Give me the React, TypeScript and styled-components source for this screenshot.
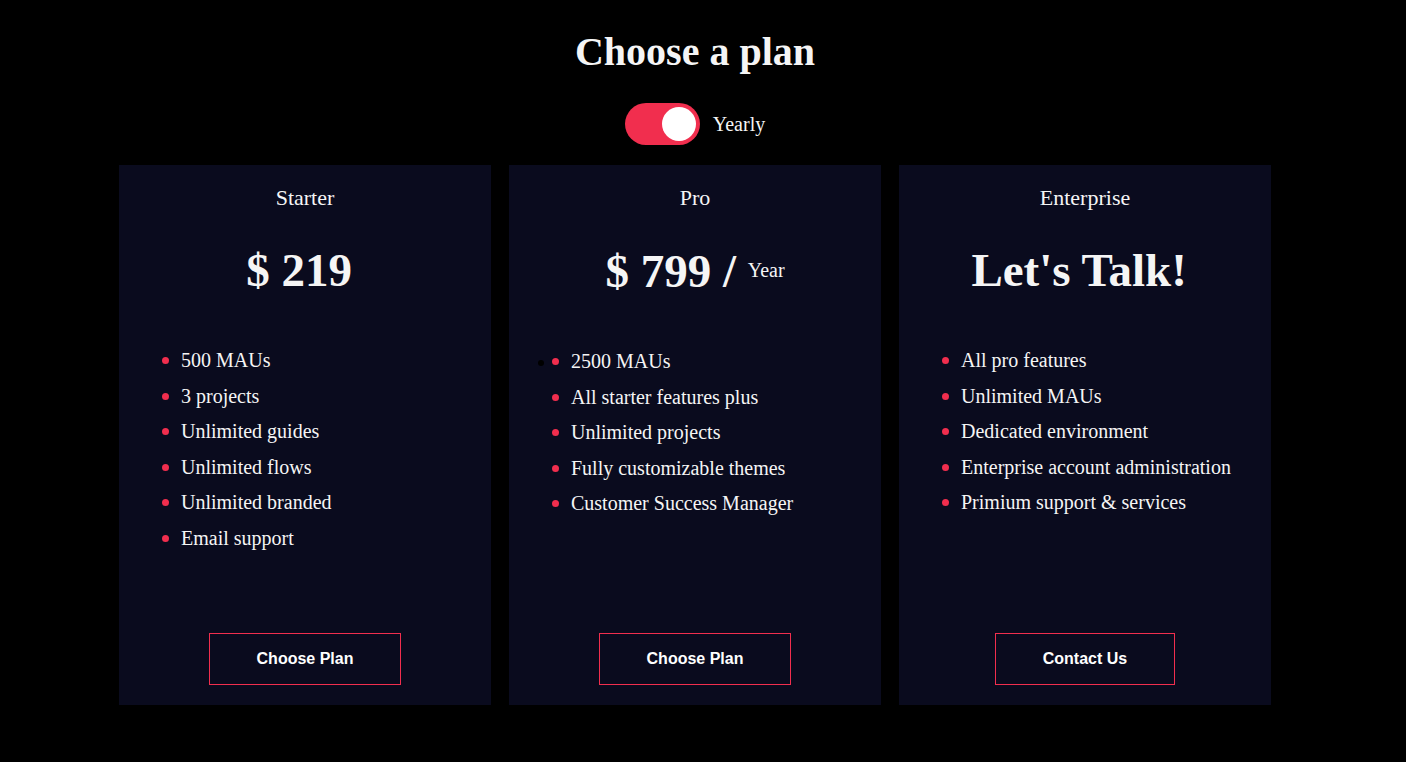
import styled, { createGlobalStyle } from "styled-components";

const Global = createGlobalStyle`
  html, body {
    margin: 0;
    padding: 0;
    background: #000;
  }
  body {
    font-family: "Liberation Serif", "Times New Roman", serif;
    color: #f5f5f5;
  }
`;

const Page = styled.div`
  width: 1390px;
  display: flex;
  flex-direction: column;
  align-items: center;
  padding-top: 28px;
`;

const Title = styled.h1`
  margin: 0;
  font-size: 40px;
  font-weight: bold;
  line-height: 48px;
`;

const ToggleRow = styled.div`
  display: flex;
  align-items: center;
  gap: 13px;
  margin-top: 27px;
  font-size: 20px;
`;

const Switch = styled.button`
  width: 75px;
  height: 42px;
  border-radius: 21px;
  border: none;
  padding: 0 4px;
  background: #f12e4e;
  display: flex;
  align-items: center;
  justify-content: flex-end;
  cursor: pointer;
`;

const Knob = styled.span`
  width: 34px;
  height: 34px;
  border-radius: 50%;
  background: #fff;
`;

const Cards = styled.div`
  display: flex;
  gap: 18px;
  margin-top: 20px;
`;

const Card = styled.div`
  width: 372px;
  height: 540px;
  box-sizing: border-box;
  background: #0a0b1e;
  padding: 20px 0 20px;
  display: flex;
  flex-direction: column;
  align-items: center;
`;

const PlanName = styled.div`
  font-size: 22px;
  line-height: 25px;
`;

const Price = styled.div`
  margin-top: 33px;
  font-size: 47px;
  font-weight: bold;
  line-height: 54px;
  white-space: pre;
`;

const Per = styled.span`
  font-size: 20px;
  font-weight: normal;
  vertical-align: 10px;
`;

const Features = styled.ul<{ $stray?: boolean }>`
  align-self: stretch;
  margin: 46px 0 0;
  padding-left: 62px;
  list-style: none;
  font-size: 20px;
  line-height: 35.5px;
  position: relative;

  ${(p) =>
    p.$stray &&
    `
    &::before {
      content: "";
      position: absolute;
      left: 29px;
      top: 16px;
      width: 6px;
      height: 6px;
      border-radius: 50%;
      background: #000;
    }
  `}
`;

const Feature = styled.li`
  position: relative;

  &::before {
    content: "";
    position: absolute;
    left: -19px;
    top: 14px;
    width: 7px;
    height: 7px;
    border-radius: 50%;
    background: #f12e4e;
  }
`;

const PlanButton = styled.button`
  margin-top: auto;
  height: 52px;
  padding: 0 47px;
  background: transparent;
  border: 1px solid #f12e4e;
  color: #fff;
  font-family: "Liberation Sans", Arial, sans-serif;
  font-weight: bold;
  font-size: 16px;
  cursor: pointer;
`;

const plans = [
  {
    name: "Starter",
    price: <>{"$ 219 "}</>,
    features: [
      "500 MAUs",
      "3 projects",
      "Unlimited guides",
      "Unlimited flows",
      "Unlimited branded",
      "Email support",
    ],
    cta: "Choose Plan",
  },
  {
    name: "Pro",
    price: (
      <>
        {"$ 799 / "}
        <Per>Year</Per>
      </>
    ),
    features: [
      "2500 MAUs",
      "All starter features plus",
      "Unlimited projects",
      "Fully customizable themes",
      "Customer Success Manager",
    ],
    cta: "Choose Plan",
    stray: true,
  },
  {
    name: "Enterprise",
    price: <>{"Let's Talk! "}</>,
    features: [
      "All pro features",
      "Unlimited MAUs",
      "Dedicated environment",
      "Enterprise account administration",
      "Primium support & services",
    ],
    cta: "Contact Us",
  },
];

export default function App() {
  return (
    <>
      <Global />
      <Page>
        <Title>Choose a plan</Title>
        <ToggleRow>
          <Switch aria-label="Billing period">
            <Knob />
          </Switch>
          <span>Yearly</span>
        </ToggleRow>
        <Cards>
          {plans.map((plan) => (
            <Card key={plan.name}>
              <PlanName>{plan.name}</PlanName>
              <Price>{plan.price}</Price>
              <Features $stray={plan.stray}>
                {plan.features.map((f) => (
                  <Feature key={f}>{f}</Feature>
                ))}
              </Features>
              <PlanButton>{plan.cta}</PlanButton>
            </Card>
          ))}
        </Cards>
      </Page>
    </>
  );
}
